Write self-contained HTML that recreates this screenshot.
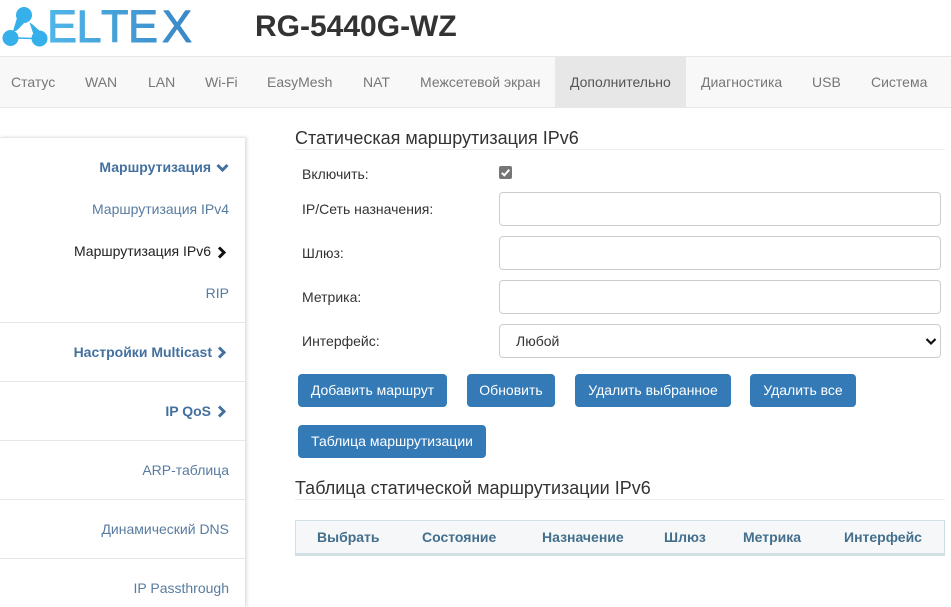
<!DOCTYPE html>
<html lang="ru">
<head>
<meta charset="utf-8">
<title>RG-5440G-WZ</title>
<style>
html,body{margin:0;padding:0;background:#fff;}
body{position:relative;width:951px;height:607px;overflow:hidden;font-family:"Liberation Sans",sans-serif;font-size:14px;color:#333;}
.a{position:absolute;white-space:nowrap;line-height:20px;}
.nav{position:absolute;left:0;top:56px;width:951px;background:#f8f8f8;border-top:1px solid #e7e7e7;border-bottom:1px solid #e7e7e7;box-sizing:content-box;height:50px;}
.n{position:absolute;top:72px;line-height:20px;color:#777;white-space:nowrap;}
.active{position:absolute;left:555px;top:57px;width:131px;height:50px;background:#e7e7e7;}
.side{position:absolute;left:0;top:137px;width:245px;height:470px;background:#fff;border-top:1px solid #e7e7e7;box-sizing:border-box;box-shadow:2px 0 3px rgba(0,0,0,.13);}
.hr{position:absolute;left:0;width:245px;height:1px;background:#e7e7e7;}
.r{position:absolute;white-space:nowrap;line-height:20px;text-align:right;right:722px;color:#587ca0;}
.b{font-weight:bold;color:#43709f;}
.ch{position:absolute;}
h4{position:absolute;margin:0;font-weight:normal;font-size:18px;line-height:20px;color:#333;white-space:nowrap;}
.line{position:absolute;left:295px;width:650px;height:1px;background:#eee;}
.inp{position:absolute;left:499px;width:442px;height:34px;box-sizing:border-box;background:#fff;border:1px solid #ccc;border-radius:4px;}
.btn{position:absolute;height:33px;line-height:31px;box-sizing:border-box;background:#337ab7;border:1px solid #337ab7;border-radius:4px;color:#fff;text-align:center;white-space:nowrap;}
.th{position:absolute;top:528px;line-height:18px;font-weight:bold;color:#436f8d;white-space:nowrap;}
</style>
</head>
<body>
<svg style="position:absolute;left:0;top:0" width="200" height="56" viewBox="0 0 200 56">
<defs><linearGradient id="g" gradientUnits="userSpaceOnUse" x1="50" x2="192" y1="0" y2="0"><stop offset="0" stop-color="#4fb6e8"/><stop offset="1" stop-color="#3b87c6"/></linearGradient></defs>
<g fill="#36b0ea">
<circle cx="24" cy="15" r="8"/>
<circle cx="10.500" cy="38" r="8"/>
<circle cx="39.500" cy="38.500" r="8"/>
<path d="M17 18 L25 22 L18.500 29 L16 31 L13 31Z"/>
<path d="M29.500 22.500 L32 24 L41 32 L34 36Z"/>
</g>
<path d="M16 38 L34 38.500" stroke="#36b0ea" stroke-width="1.500"/>
<text x="47 76.500 101 128 162" y="42" font-family="Liberation Sans" font-size="45" fill="url(#g)" stroke="url(#g)" stroke-width="1" stroke-linejoin="round">ELTEX</text>
</svg>
<div class="a" style="left:255px;top:10px;font-size:30px;line-height:34px;font-weight:bold;color:#333">RG-5440G-WZ</div>

<div class="nav"></div>
<div class="active"></div>
<div class="n" style="left:11px">Статус</div>
<div class="n" style="left:85px">WAN</div>
<div class="n" style="left:148px">LAN</div>
<div class="n" style="left:205px">Wi-Fi</div>
<div class="n" style="left:267px">EasyMesh</div>
<div class="n" style="left:363px">NAT</div>
<div class="n" style="left:420px">Межсетевой экран</div>
<div class="n" style="left:570px;color:#555">Дополнительно</div>
<div class="n" style="left:701px">Диагностика</div>
<div class="n" style="left:812px">USB</div>
<div class="n" style="left:871px">Система</div>

<div class="side"></div>
<div class="hr" style="top:322px"></div>
<div class="hr" style="top:381px"></div>
<div class="hr" style="top:440px"></div>
<div class="hr" style="top:499px"></div>
<div class="hr" style="top:558px"></div>

<div class="r b" style="top:157px;right:740px">Маршрутизация</div>
<svg class="ch" style="left:216px;top:163px" width="13" height="10" viewBox="0 0 13 10"><path d="M1.500 2 L6.500 7 L11.500 2" fill="none" stroke="#43709f" stroke-width="3"/></svg>
<div class="r" style="top:199px">Маршрутизация IPv4</div>
<div class="r" style="top:241px;right:740px;color:#222">Маршрутизация IPv6</div>
<svg class="ch" style="left:217px;top:246px" width="10" height="13" viewBox="0 0 10 13"><path d="M2 1.500 L7 6.500 L2 11.500" fill="none" stroke="#111" stroke-width="3"/></svg>
<div class="r" style="top:283px">RIP</div>
<div class="r b" style="top:342px;right:739px">Настройки Multicast</div>
<svg class="ch" style="left:217px;top:346px" width="10" height="13" viewBox="0 0 10 13"><path d="M2 1.500 L7 6.500 L2 11.500" fill="none" stroke="#43709f" stroke-width="3"/></svg>
<div class="r b" style="top:401px;right:740px">IP QoS</div>
<svg class="ch" style="left:217px;top:405px" width="10" height="13" viewBox="0 0 10 13"><path d="M2 1.500 L7 6.500 L2 11.500" fill="none" stroke="#43709f" stroke-width="3"/></svg>
<div class="r" style="top:460px">ARP-таблица</div>
<div class="r" style="top:519px">Динамический DNS</div>
<div class="r" style="top:578px">IP Passthrough</div>

<h4 style="left:295px;top:128px">Статическая маршрутизация IPv6</h4>
<div class="line" style="top:149px"></div>
<div class="a" style="left:302px;top:164px">Включить:</div>
<svg style="position:absolute;left:499px;top:166px" width="13" height="13" viewBox="0 0 13 13"><rect width="13" height="13" rx="2" fill="#767676"/><path d="M2.800 6.800 L5.300 9.300 L10.300 3.700" fill="none" stroke="#fff" stroke-width="2"/></svg>
<div class="a" style="left:302px;top:199px">IP/Сеть назначения:</div>
<div class="inp" style="top:192px"></div>
<div class="a" style="left:302px;top:243px">Шлюз:</div>
<div class="inp" style="top:236px"></div>
<div class="a" style="left:302px;top:287px">Метрика:</div>
<div class="inp" style="top:280px"></div>
<div class="a" style="left:302px;top:331px">Интерфейс:</div>
<div class="inp" style="top:324px"></div>
<div class="a" style="left:516px;top:331px">Любой</div>
<svg style="position:absolute;left:925px;top:337px" width="12" height="9" viewBox="0 0 12 9"><path d="M1.500 2 L6 6.500 L10.500 2" fill="none" stroke="#111" stroke-width="2.200"/></svg>

<div class="btn" style="left:298px;top:374px;width:149px">Добавить маршрут</div>
<div class="btn" style="left:467px;top:374px;width:88px">Обновить</div>
<div class="btn" style="left:575px;top:374px;width:156px">Удалить выбранное</div>
<div class="btn" style="left:750px;top:374px;width:106px">Удалить все</div>
<div class="btn" style="left:298px;top:425px;width:188px">Таблица маршрутизации</div>

<h4 style="left:295px;top:478px">Таблица статической маршрутизации IPv6</h4>
<div class="line" style="top:499px"></div>

<div style="position:absolute;left:295px;top:520px;width:650px;height:36px;box-sizing:border-box;background:#f5f7f8;border:1px solid #cfdfe4;border-bottom:3px solid #cfdfe4"></div>
<div class="th" style="left:317px">Выбрать</div>
<div class="th" style="left:422px">Состояние</div>
<div class="th" style="left:542px">Назначение</div>
<div class="th" style="left:664px">Шлюз</div>
<div class="th" style="left:743px">Метрика</div>
<div class="th" style="left:844px">Интерфейс</div>
</body>
</html>
